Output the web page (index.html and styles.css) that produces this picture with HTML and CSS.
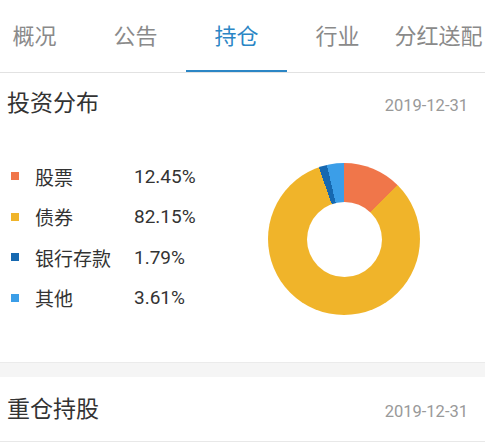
FILE: index.html
```html
<!DOCTYPE html>
<html lang="zh">
<head>
<meta charset="utf-8">
<link rel="stylesheet" href="styles.css">
</head>
<body>
<div class="page">
  <nav class="tabs">
    <div class="tab-track">
      <div class="tab">概况</div>
      <div class="tab">公告</div>
      <div class="tab active">持仓</div>
      <div class="tab">行业</div>
      <div class="tab">分红送配</div>
    </div>
  </nav>

  <section class="card">
    <header class="card-head">
      <h2 class="card-title">投资分布</h2>
      <span class="card-date">2019-12-31</span>
    </header>
    <div class="dist">
      <ul class="legend">
        <li class="row"><span class="dot c1"></span><span class="name">股票</span><span class="pct">12.45%</span></li>
        <li class="row"><span class="dot c2"></span><span class="name">债券</span><span class="pct">82.15%</span></li>
        <li class="row"><span class="dot c3"></span><span class="name">银行存款</span><span class="pct">1.79%</span></li>
        <li class="row"><span class="dot c4"></span><span class="name">其他</span><span class="pct">3.61%</span></li>
      </ul>
      <div class="donut"></div>
    </div>
  </section>

  <div class="band"></div>

  <section class="card">
    <header class="card-head last">
      <h2 class="card-title">重仓持股</h2>
      <span class="card-date">2019-12-31</span>
    </header>
  </section>
</div>
</body>
</html>
```

FILE: styles.css
```css
* { box-sizing: border-box; }
html, body { margin: 0; padding: 0; background: #fff; }
body {
  font-family: Roboto, "Noto Sans CJK SC", "Noto Sans", sans-serif;
  color: #333;
  width: 485px;
  height: 444px;
  overflow: hidden;
}
.page { width: 485px; }

.tabs {
  height: 73px;
  border-bottom: 1px solid #e2e2e2;
  overflow: hidden;
}
.tab-track {
  display: flex;
  margin-left: -16px;
  height: 72px;
}
.tab {
  flex: 0 0 101px;
  display: flex;
  align-items: center;
  justify-content: center;
  font-size: 22px;
  color: #8a8a8a;
  white-space: nowrap;
  height: 72px;
  padding-bottom: 2px;
  border-bottom: 2px solid transparent;
}
.tab.active {
  color: #2b86c5;
  border-bottom-color: #2b86c5;
}

.card-head {
  display: flex;
  align-items: baseline;
  justify-content: space-between;
  padding: 15px 17px 0 7px;
  height: 60px;
}
.card-head.last {
  height: 65px;
  padding-top: 17px;
  border-bottom: 1px solid #e8e8e8;
}
.card-title {
  margin: 0;
  font-size: 23px;
  font-weight: 400;
  color: #333;
  line-height: 32px;
}
.card-date {
  font-size: 16.5px;
  color: #999;
}

.dist {
  display: flex;
  justify-content: space-between;
  align-items: flex-start;
  height: 229px;
  padding: 0 65px 0 11px;
}
.legend {
  list-style: none;
  margin: 23px 0 0;
  padding: 0;
}
.row {
  display: grid;
  grid-template-columns: 24px 99px auto;
  align-items: center;
  height: 40.5px;
  font-size: 19px;
  color: #333;
}
.dot { width: 8px; height: 8px; }
.c1 { background: #f0764a; }
.c2 { background: #f0b42a; }
.c3 { background: #1668b0; }
.c4 { background: #3b9ee8; }

.donut {
  position: relative;
  margin-top: 30px;
  width: 152px;
  height: 152px;
  border-radius: 50%;
  background: conic-gradient(
    #f0764a 0deg 44.8deg,
    #f0b42a 44.8deg 340.6deg,
    #1668b0 340.6deg 347deg,
    #3b9ee8 347deg 360deg
  );
}
.donut::after {
  content: "";
  position: absolute;
  left: 38.5px;
  top: 38.5px;
  width: 75px;
  height: 75px;
  border-radius: 50%;
  background: #fff;
}

.band {
  height: 15px;
  background: #f5f5f5;
  border-top: 1px solid #ebebeb;
}
```
